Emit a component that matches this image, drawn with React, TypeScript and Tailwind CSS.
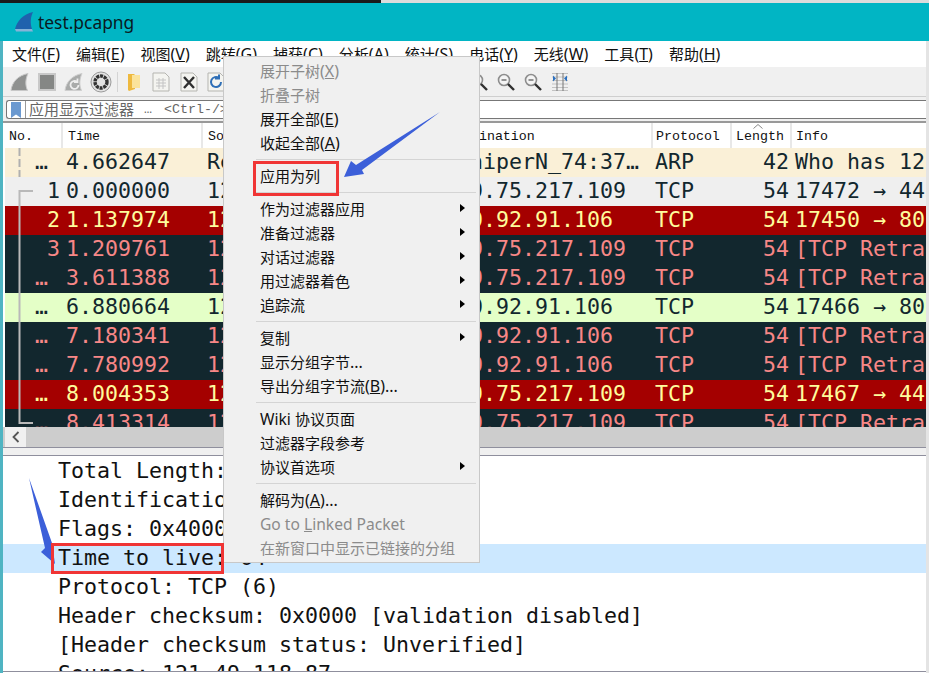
const mono = "font-['DejaVu_Sans_Mono','Noto_Sans_CJK_SC',monospace]";
const thinMono = "font-['Liberation_Mono','Noto_Sans_CJK_SC',monospace]";
const ui = "font-['Noto_Sans','Noto_Sans_CJK_SC',sans-serif]";

const menus: [string, string][] = [
  ["文件", "F"], ["编辑", "E"], ["视图", "V"], ["跳转", "G"], ["捕获", "C"], ["分析", "A"],
  ["统计", "S"], ["电话", "Y"], ["无线", "W"], ["工具", "T"], ["帮助", "H"],
];

const tones = {
  arp: "bg-[#faf0d7] text-[#12272e]",
  plain: "bg-[#efefef] text-[#12272e]",
  red: "bg-[#a40000] text-[#fffc9c]",
  dark: "bg-[#12272e] text-[#f78787]",
  green: "bg-[#e4ffc7] text-[#12272e]",
};

type Row = { no: string; time: string; src: string; dst: string; proto: string; len: string; info: string; tone: keyof typeof tones };

const rows: Row[] = [
  { no: "…", time: "4.662647", src: "RealtekS_c8:12:9a", dst: "JuniperN_74:37…", proto: "ARP", len: "42", info: "Who has 121.49.118.1?", tone: "arp" },
  { no: "1", time: "0.000000", src: "121.49.118.87", dst: "119.75.217.109", proto: "TCP", len: "54", info: "17472 → 443 [ACK]", tone: "plain" },
  { no: "2", time: "1.137974", src: "121.49.118.87", dst: "110.92.91.106", proto: "TCP", len: "54", info: "17450 → 80 [RST]", tone: "red" },
  { no: "3", time: "1.209761", src: "121.49.118.87", dst: "119.75.217.109", proto: "TCP", len: "54", info: "[TCP Retransmission]", tone: "dark" },
  { no: "…", time: "3.611388", src: "121.49.118.87", dst: "119.75.217.109", proto: "TCP", len: "54", info: "[TCP Retransmission]", tone: "dark" },
  { no: "…", time: "6.880664", src: "121.49.118.87", dst: "110.92.91.106", proto: "TCP", len: "54", info: "17466 → 80 [ACK]", tone: "green" },
  { no: "…", time: "7.180341", src: "121.49.118.87", dst: "110.92.91.106", proto: "TCP", len: "54", info: "[TCP Retransmission]", tone: "dark" },
  { no: "…", time: "7.780992", src: "121.49.118.87", dst: "110.92.91.106", proto: "TCP", len: "54", info: "[TCP Retransmission]", tone: "dark" },
  { no: "…", time: "8.004353", src: "121.49.118.87", dst: "119.75.217.109", proto: "TCP", len: "54", info: "17467 → 443 [RST]", tone: "red" },
  { no: "…", time: "8.413314", src: "121.49.118.87", dst: "119.75.217.109", proto: "TCP", len: "54", info: "[TCP Retransmission]", tone: "dark" },
];

const columns = "grid grid-cols-[58px_140px_238px_212px_79px_60px_134px]";

type Item = { label?: string; key?: string; tail?: string; off?: boolean; sub?: boolean; sep?: boolean };

const items: Item[] = [
  { label: "展开子树", key: "X", off: true },
  { label: "折叠子树", off: true },
  { label: "展开全部", key: "E" },
  { label: "收起全部", key: "A" },
  { sep: true },
  { label: "应用为列" },
  { sep: true },
  { label: "作为过滤器应用", sub: true },
  { label: "准备过滤器", sub: true },
  { label: "对话过滤器", sub: true },
  { label: "用过滤器着色", sub: true },
  { label: "追踪流", sub: true },
  { sep: true },
  { label: "复制", sub: true },
  { label: "显示分组字节", tail: "..." },
  { label: "导出分组字节流", key: "B", tail: "..." },
  { sep: true },
  { label: "Wiki 协议页面" },
  { label: "过滤器字段参考" },
  { label: "协议首选项", sub: true },
  { sep: true },
  { label: "解码为", key: "A", tail: "..." },
  { label: "Go to Linked Packet", off: true },
  { label: "在新窗口中显示已链接的分组", off: true },
];

// latin runs in the reference sit a touch larger than the CJK ones
function Latin({ children }: { children: React.ReactNode }) {
  return <span className="text-[16px]">{children}</span>;
}

function Fin() {
  return (
    <svg viewBox="0 0 20 20" className="size-5" aria-hidden>
      <path d="M1 18.5C2 10 8 3.5 18 1.5 15.5 7 15 13 17.5 18.5Z" fill="#8f9190" stroke="#c8c8c8" />
    </svg>
  );
}

function Logo() {
  return (
    <svg viewBox="0 0 20 22" className="h-[22px] w-5" aria-hidden>
      <path d="M1 18C3 10 9 3 19 1 16.5 6 16 12 18 18Z" fill="#1f62ad" />
      <path d="M1 18h17l1 2.5H2Z" fill="#86b3d8" />
    </svg>
  );
}

function Stop() {
  return (
    <svg viewBox="0 0 20 20" className="size-5" aria-hidden>
      <rect x="1" y="1" width="18" height="18" fill="#c9c9c9" />
      <rect x="3" y="3" width="14" height="14" fill="#858785" />
    </svg>
  );
}

function Restart() {
  return (
    <svg viewBox="0 0 20 20" className="size-5" aria-hidden>
      <path d="M1 18.5C2 10 8 3.5 18 1.5 15.5 7 15 13 17.5 18.5Z" fill="#a9abaa" stroke="#cfcfcf" />
      <path d="M14.5 13a4 4 0 1 1-1.5-3.2M13.5 6.5v3.6H10" fill="none" stroke="#eeeeee" strokeWidth="1.8" />
    </svg>
  );
}

function Gear() {
  return (
    <svg viewBox="0 0 22 22" className="size-[22px]" aria-hidden>
      <circle cx="11" cy="11" r="10" fill="#e2e2e2" stroke="#9a9a9a" />
      <circle cx="11" cy="11" r="6" fill="none" stroke="#333" strokeWidth="3.4" strokeDasharray="3 0.8" />
      <circle cx="11" cy="11" r="2" fill="#e2e2e2" />
    </svg>
  );
}

function Folder() {
  return (
    <svg viewBox="0 0 16 20" className="h-5 w-4" aria-hidden>
      <path d="M2 2h6l1 1v14l-6 2-1-1Z" fill="#eeb93f" />
      <path d="M6 3h8v13H6Z" fill="#fbe39b" />
    </svg>
  );
}

function Doc({ mark }: { mark?: "x" | "reload" }) {
  return (
    <svg viewBox="0 0 18 20" className="h-5 w-[18px]" aria-hidden>
      <path d="M1 1h12l4 4v14H1Z" fill="#f4f4f0" stroke="#b5b5b0" />
      {!mark && <path d="M4 8h10M4 11h10M4 14h10M7 6v11M11 6v11" stroke="#c4c4c4" />}
      {mark === "x" && <path d="M4 5l10 11M14 5L4 16" stroke="#303030" strokeWidth="2.4" />}
      {mark === "reload" && <path d="M14 10a5 5 0 1 1-2-4M12 2.5V6.5H8" fill="none" stroke="#2f6fb7" strokeWidth="2" />}
    </svg>
  );
}

function Magnifier({ minus = true }: { minus?: boolean }) {
  return (
    <svg viewBox="0 0 18 18" className="size-[18px]" aria-hidden>
      <circle cx="7" cy="7" r="5.5" fill="#f4f4f4" stroke="#8d8d8d" strokeWidth="1.6" />
      <path d="M11 11l6 6" stroke="#303030" strokeWidth="2.4" />
      {minus && <path d="M4.5 7h5" stroke="#7a7a7a" strokeWidth="1.6" />}
    </svg>
  );
}

function ResizeColumns() {
  return (
    <svg viewBox="0 0 18 20" className="h-5 w-[18px]" aria-hidden>
      <path d="M1 1.5h16M1 5h16M1 8.5h16M1 12h16M1 15.5h16M1 18.5h16" stroke="#c2c2c2" />
      <path d="M6 1v18M12 1v18" stroke="#777" />
      <path d="M2 3.5l3 3-3 3ZM16 3.5l-3 3 3 3Z" fill="#2a6fc0" />
    </svg>
  );
}

function Bookmark() {
  return (
    <svg viewBox="0 0 10 16" className="h-4 w-2.5" aria-hidden>
      <path d="M0 0h10v16L5 12.5 0 16Z" fill="#6b99d0" />
    </svg>
  );
}

function Cell({ w, children }: { w: string; children: React.ReactNode }) {
  return <div className={`flex items-center justify-center ${w}`}>{children}</div>;
}

function PacketTable() {
  return (
    <div className="relative h-[279px] overflow-hidden">
      {rows.map((r) => (
        <div key={r.time} className={`${columns} h-[29px] whitespace-pre text-[21.6px] leading-[27px] ${tones[r.tone]}`}>
          <div className={r.no === "…" ? "pr-[15px] text-right" : "pr-[3px] text-right"}>{r.no}</div>
          <div className="overflow-hidden pl-[3px]">{r.time}</div>
          <div className="overflow-hidden pl-1">{r.src}</div>
          <div className="overflow-hidden pl-[3px]">{r.dst}</div>
          <div className="overflow-hidden pl-[2px]">{r.proto}</div>
          <div className="pr-[3px] text-right">{r.len}</div>
          <div className="overflow-hidden pl-[3px]">{r.info}</div>
        </div>
      ))}
      <svg viewBox="0 0 40 279" className="absolute left-0 top-0 h-[279px] w-10" aria-hidden>
        <path d="M14.5 0v29" stroke="#b0b0b0" strokeWidth="2" strokeDasharray="8 3" />
        <path d="M28 43H14.5V275H28" fill="none" stroke="#b9b9b9" strokeWidth="2" />
      </svg>
    </div>
  );
}

function ContextMenu() {
  return (
    <div className={`absolute left-[223px] top-[56px] h-[507px] w-[257px] border border-[#c8c8c8] bg-[#f0f0f0] pt-[2px] text-[15px] text-[#111] ${ui}`}>
      {items.map((it, i) =>
        it.sep ? (
          <div key={i} className="flex h-[9px] items-center pl-8 pr-[3px]">
            <div className="h-px w-full bg-[#d4d4d4]" />
          </div>
        ) : (
          <div key={i} className={`relative h-6 whitespace-pre pl-9 leading-6 ${it.off ? "text-[#8b8b8b]" : ""}`}>
            {it.label === "Go to Linked Packet" ? (
              <span className="text-[15.6px]">
                Go to <span className="underline">L</span>inked Packet
              </span>
            ) : it.label === "Wiki 协议页面" ? (
              <>
                <span className="text-[15.6px]">Wiki </span>协议页面
              </>
            ) : (
              it.label
            )}
            {it.key && (
              <Latin>
                (<span className="underline">{it.key}</span>)
              </Latin>
            )}
            {it.tail && <Latin>{it.tail}</Latin>}
            {it.sub && <span className="absolute right-[14px] top-[7px] h-0 w-0 border-y-[4px] border-l-[5px] border-y-transparent border-l-black" />}
          </div>
        ),
      )}
    </div>
  );
}

function Annotations() {
  return (
    <>
      <svg viewBox="0 0 929 673" className="absolute left-0 top-0 h-[673px] w-[929px]" aria-hidden>
        <path d="M440 112L362 170 364 174 344 177 351 161 356 165Z" fill="#3c5fd9" />
        <path d="M29 478L52 543 55 564 41 552 45 548Z" fill="#3c5fd9" />
      </svg>
      <div className="absolute left-[253px] top-[161px] h-[35px] w-[86px] border-[3px] border-[#f03535]" />
      <div className="absolute left-[51px] top-[543px] h-[31px] w-[173px] border-[3px] border-[#f03535]" />
    </>
  );
}

export default function App() {
  return (
    <div className="relative h-[673px] w-[929px] overflow-hidden bg-white">
      <div className="flex h-[3px]">
        <div className="w-[381px] bg-[#1a1a1a]" />
        <div className="flex-1 bg-[#dcdcdc]" />
      </div>
      <div className={`flex h-[38px] items-center gap-[4px] bg-[#01b5c4] pl-[14px] text-[17.4px] text-[#0a1a22] ${ui}`}>
        <Logo />
        <span>test.pcapng</span>
      </div>
      <div className="h-[632px] border-l-[3px] border-r-[3px] border-l-[#4fb4c2] border-r-[#e4e4e4]">
        <div className={`flex h-[26px] items-center gap-[16px] whitespace-pre bg-white pl-[9px] text-[15px] text-[#111] ${ui}`}>
          {menus.map(([name, key]) => (
            <span key={key}>
              {name}
              <Latin>
                (<span className="underline">{key}</span>)
              </Latin>
            </span>
          ))}
        </div>
        <div className="flex h-[30px] items-center border-b border-[#cfcfcf] bg-[#f0f0f0] pl-[3px]">
          <Cell w="w-[27px]"><Fin /></Cell>
          <Cell w="w-[27px]"><Stop /></Cell>
          <Cell w="w-[27px]"><Restart /></Cell>
          <Cell w="w-[27px]"><Gear /></Cell>
          <div className="mx-[3px] h-[20px] w-px bg-[#d4d4d4]" />
          <Cell w="w-[25px]"><Folder /></Cell>
          <Cell w="w-[29px]"><Doc /></Cell>
          <Cell w="w-[27px]"><Doc mark="x" /></Cell>
          <Cell w="w-[27px]"><Doc mark="reload" /></Cell>
          <div className="w-[236px]" />
          <Cell w="w-[27px]"><Magnifier minus={false} /></Cell>
          <Cell w="w-[27px]"><Magnifier /></Cell>
          <Cell w="w-[27px]"><Magnifier /></Cell>
          <Cell w="w-[27px]"><ResizeColumns /></Cell>
        </div>
        <div className="bg-[#f0f0f0] pb-[2px] pl-[3px] pt-[3px]">
          <div className={`flex h-[19px] items-center whitespace-pre rounded-l-[3px] border-y border-l border-[#777] bg-white pl-1 text-[13.3px] text-[#666] ${thinMono}`}>
            <Bookmark />
            <div className="ml-1 h-full w-px bg-[#999]" />
            <span className={`ml-[3px] text-[15px] ${ui}`}>应用显示过滤器</span>
            <span className="ml-[10px]">…</span>
            <span className="ml-[12px]">{"<Ctrl-/>"}</span>
          </div>
        </div>
        <div className="h-[2px] bg-[#999]" />
        <div className={`pl-[2px] ${mono}`}>
          <div className={`${columns} h-[25px] whitespace-pre bg-white text-[13.3px] leading-[27px] text-[#111] ${thinMono}`}>
            <div className="border-r-2 border-[#e8e8e8] pl-[4px]">No.</div>
            <div className="border-r-2 border-[#e8e8e8] pl-[5px]">Time</div>
            <div className="overflow-hidden border-r-2 border-[#e8e8e8] pl-[5px]">Source</div>
            <div className="border-r-2 border-[#e8e8e8] pl-[6px]">Destination</div>
            <div className="border-r-2 border-[#e8e8e8] pl-[3px]">Protocol</div>
            <div className="relative border-r-2 border-[#e8e8e8] pl-[4px]">
              Length
              <svg viewBox="0 0 10 5" className="absolute left-[21px] top-[1px] h-[5px] w-[10px]" aria-hidden>
                <path d="M0.5 4.5L5 0.5l4.5 4" fill="none" stroke="#888" />
              </svg>
            </div>
            <div className="pl-[4px]">Info</div>
          </div>
          <PacketTable />
        </div>
        <div className="flex h-[20px] bg-[#cdcdcd] pl-[2px]">
          <div className="flex w-[21px] items-center justify-center bg-[#f0f0f0]">
            <svg viewBox="0 0 8 12" className="h-3 w-2" aria-hidden>
              <path d="M6.5 1L1.5 6l5 5" fill="none" stroke="#555" strokeWidth="1.8" />
            </svg>
          </div>
        </div>
        <div className="h-[9px] border-y border-[#8f8f9d] bg-[#f0f0f0]" />
        <div className={`h-[215px] overflow-hidden whitespace-pre pt-px text-[21.6px] leading-[27px] text-[#111] ${mono}`}>
          <div className="h-[29px] pl-[55px]">Total Length: 40</div>
          <div className="h-[29px] pl-[55px]">Identification: 0x1234</div>
          <div className="h-[29px] pl-[55px]">Flags: 0x4000, Don't fragment</div>
          <div className="h-[29px] bg-[#cce8ff] pl-[55px]">Time to live: 64</div>
          <div className="h-[29px] pl-[55px]">Protocol: TCP (6)</div>
          <div className="h-[29px] pl-[55px]">Header checksum: 0x0000 [validation disabled]</div>
          <div className="h-[29px] pl-[55px]">[Header checksum status: Unverified]</div>
          <div className="h-[29px] pl-[55px]">Source: 121.49.118.87</div>
        </div>
        <div className="h-px bg-[#8f8f9d]" />
      </div>
      <ContextMenu />
      <Annotations />
    </div>
  );
}
